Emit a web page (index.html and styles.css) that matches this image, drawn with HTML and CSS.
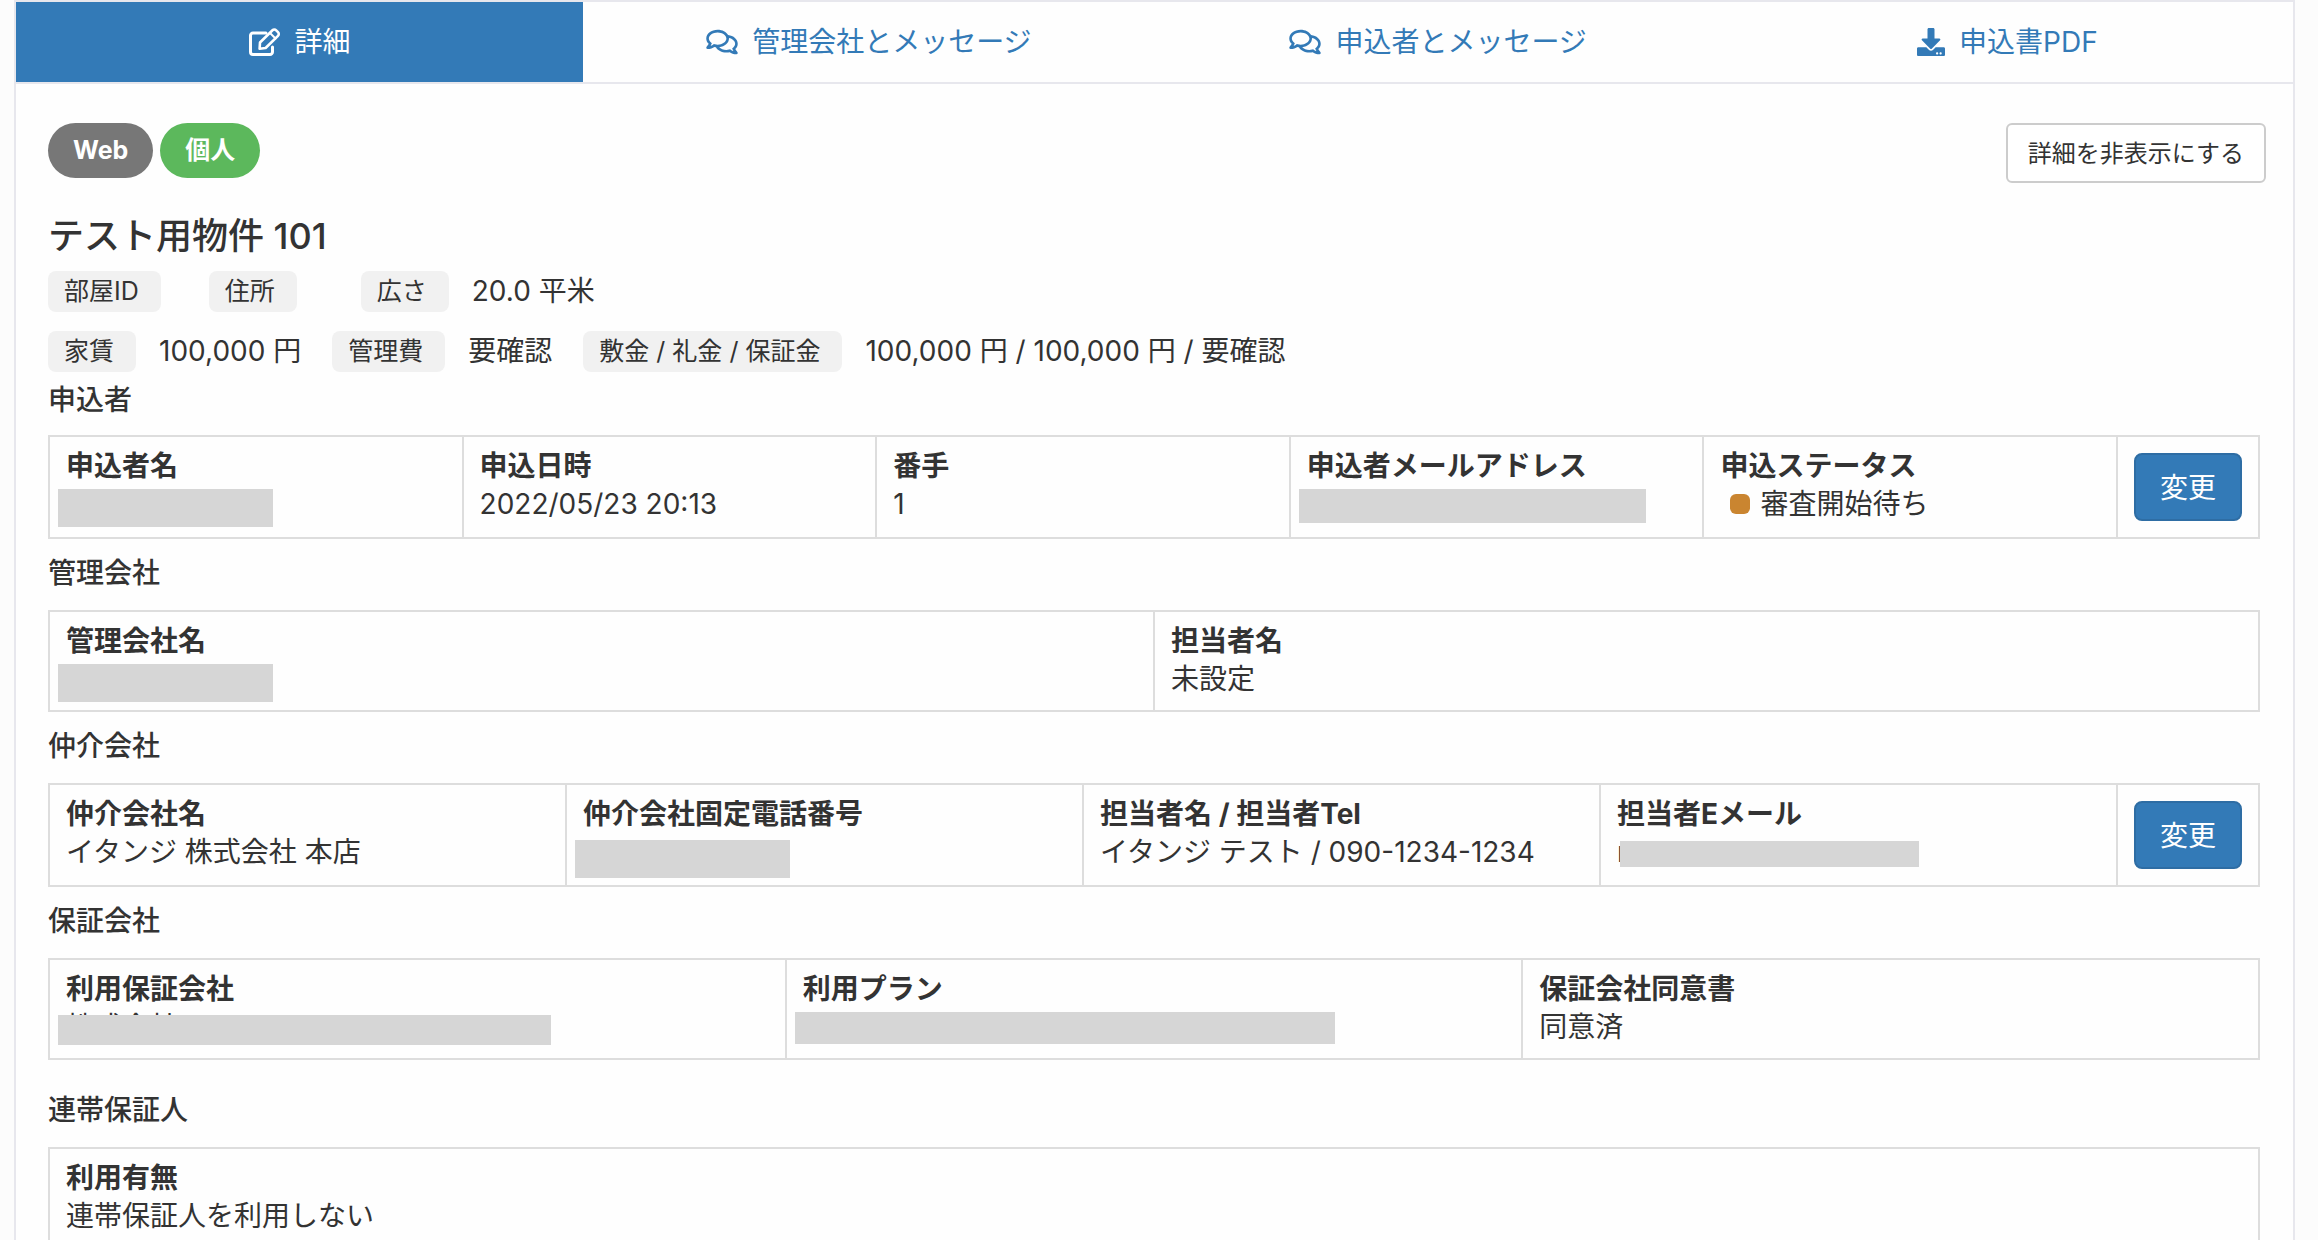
FILE: index.html
```html
<!DOCTYPE html>
<html lang="ja">
<head>
    <meta charset="UTF-8">
    <meta name="viewport" content="width=device-width, initial-scale=1.0">
    <title>申込詳細</title>
    <link rel="stylesheet" href="styles.css">
</head>
<body>
    <div class="panel">
        <nav class="tabs">
            <a href="#detail" class="tab active">
                <svg class="icon icon-wide" viewBox="0 0 32 28" fill="none" stroke="currentColor" stroke-width="3" stroke-linejoin="round" stroke-linecap="round">
                    <path d="M17 5H4a2.500 2.500 0 0 0-2.500 2.500V24A2.500 2.500 0 0 0 4 26.500h17a2.500 2.500 0 0 0 2.500-2.500v-5"/>
                    <path d="M11 14.500 23.500 2.300a2.600 2.600 0 0 1 3.700 0l1.800 1.800a2.600 2.600 0 0 1 0 3.700L16.600 20l-6 .8z" stroke-width="2.600"/>
                    <path d="m21 5 5.500 5.500" stroke-width="2"/>
                </svg>
                詳細
            </a>
            <a href="#company" class="tab">
                <svg class="icon icon-wide" viewBox="0 0 576 512" fill="currentColor">
                    <path d="M532 386.200c27.500-27.100 44-61.100 44-98.200 0-80-76.500-146.100-176.200-157.900C368.300 72.500 294.300 32 208 32 93.100 32 0 103.600 0 192c0 37 16.500 71 44 98.200-15.300 30.700-37.300 54.500-37.700 54.900-6.300 6.700-8.100 16.500-4.400 25 3.600 8.500 12 14 21.200 14 53.500 0 96.700-20.200 125.200-38.800 9.200 2.100 18.700 3.700 28.400 4.900C208.100 407.600 281.800 448 368 448c20.800 0 40.800-2.400 59.800-6.800C456.300 459.700 499.400 480 553 480c9.200 0 17.500-5.500 21.200-14 3.600-8.500 1.900-18.300-4.400-25-.4-.3-22.500-24.100-37.800-54.800zm-392.800-92.300L122.100 305c-14.100 9.100-28.500 16.300-43.100 21.400 2.700-4.700 5.400-9.700 8-14.800l15.500-31.100L77.700 256C64.200 242.600 48 220.700 48 192c0-60.700 73.300-112 160-112s160 51.300 160 112-73.300 112-160 112c-16.500 0-33-1.900-49-5.600l-19.800-4.500zM498.300 352l-24.700 24.400 15.500 31.100c2.600 5.100 5.300 10.100 8 14.800-14.600-5.100-29-12.300-43.100-21.400l-17.100-11.100-19.900 4.600c-16 3.700-32.500 5.600-49 5.600-54 0-102.200-20.100-131.300-49.700C338 339.500 416 272.900 416 192c0-3.400-.4-6.700-.7-10C479.700 196.500 528 238.800 528 288c0 28.700-16.200 50.600-29.700 64z"/>
                </svg>
                管理会社とメッセージ
            </a>
            <a href="#applicant" class="tab">
                <svg class="icon icon-wide" viewBox="0 0 576 512" fill="currentColor">
                    <path d="M532 386.200c27.500-27.100 44-61.100 44-98.200 0-80-76.500-146.100-176.200-157.900C368.300 72.500 294.300 32 208 32 93.100 32 0 103.600 0 192c0 37 16.500 71 44 98.200-15.300 30.700-37.300 54.500-37.700 54.900-6.300 6.700-8.100 16.500-4.400 25 3.600 8.500 12 14 21.200 14 53.500 0 96.700-20.200 125.200-38.800 9.200 2.100 18.700 3.700 28.400 4.900C208.100 407.600 281.800 448 368 448c20.800 0 40.800-2.400 59.800-6.800C456.300 459.700 499.400 480 553 480c9.200 0 17.500-5.500 21.200-14 3.600-8.500 1.900-18.300-4.400-25-.4-.3-22.500-24.100-37.800-54.800zm-392.800-92.300L122.100 305c-14.100 9.100-28.500 16.300-43.100 21.400 2.700-4.700 5.400-9.700 8-14.800l15.500-31.100L77.700 256C64.200 242.600 48 220.700 48 192c0-60.700 73.300-112 160-112s160 51.300 160 112-73.300 112-160 112c-16.500 0-33-1.900-49-5.600l-19.800-4.500zM498.300 352l-24.700 24.400 15.500 31.100c2.600 5.100 5.300 10.100 8 14.800-14.600-5.100-29-12.300-43.100-21.400l-17.100-11.100-19.900 4.600c-16 3.700-32.500 5.600-49 5.600-54 0-102.200-20.100-131.300-49.700C338 339.500 416 272.900 416 192c0-3.400-.4-6.700-.7-10C479.700 196.500 528 238.800 528 288c0 28.700-16.200 50.600-29.700 64z"/>
                </svg>
                申込者とメッセージ
            </a>
            <a href="#pdf" class="tab">
                <svg class="icon" viewBox="0 0 512 512" fill="currentColor">
                    <path d="M216 0h80c13.300 0 24 10.700 24 24v168h87.700c17.800 0 26.700 21.500 14.100 34.100L269.700 378.300c-7.500 7.500-19.800 7.500-27.300 0L90.100 226.100c-12.600-12.600-3.700-34.100 14.100-34.100H192V24c0-13.300 10.700-24 24-24zm296 376v112c0 13.300-10.700 24-24 24H24c-13.300 0-24-10.700-24-24V376c0-13.300 10.700-24 24-24h146.700l49 49c20.100 20.100 52.500 20.100 72.600 0l49-49H488c13.300 0 24 10.700 24 24zm-124 88c0-11-9-20-20-20s-20 9-20 20 9 20 20 20 20-9 20-20zm64 0c0-11-9-20-20-20s-20 9-20 20 9 20 20 20 20-9 20-20z"/>
                </svg>
                申込書PDF
            </a>
        </nav>

        <main class="content">
            <div class="toolbar">
                <div class="badges">
                    <span class="badge">Web</span>
                    <span class="badge badge-success">個人</span>
                </div>
                <button type="button" class="btn btn-default">詳細を非表示にする</button>
            </div>

            <h1>テスト用物件 101</h1>
            <div class="room-info">
                <span class="label">部屋ID</span>
                <span class="room-value"></span>
                <span class="label">住所</span>
                <span class="room-value room-address"></span>
                <span class="label">広さ</span>
                <span class="room-value">20.0 平米</span>
            </div>
            <div class="room-info">
                <span class="label">家賃</span>
                <span class="room-value">100,000 円</span>
                <span class="label">管理費</span>
                <span class="room-value">要確認</span>
                <span class="label">敷金 / 礼金 / 保証金</span>
                <span class="room-value">100,000 円 / 100,000 円 / 要確認</span>
            </div>

            <section>
                <h2 class="first">申込者</h2>
                <table>
                    <tr>
                        <td>
                            <div class="name">申込者名</div>
                            <div class="value"><span class="mask"></span></div>
                        </td>
                        <td>
                            <div class="name">申込日時</div>
                            <div class="value">2022/05/23 20:13</div>
                        </td>
                        <td>
                            <div class="name">番手</div>
                            <div class="value">1</div>
                        </td>
                        <td>
                            <div class="name">申込者メールアドレス</div>
                            <div class="value"><span class="mask mask-address"></span></div>
                        </td>
                        <td>
                            <div class="name">申込ステータス</div>
                            <div class="value status">審査開始待ち</div>
                        </td>
                        <td class="action"><button type="button" class="btn btn-primary">変更</button></td>
                    </tr>
                </table>
            </section>

            <section>
                <h2>管理会社</h2>
                <table>
                    <tr>
                        <td>
                            <div class="name">管理会社名</div>
                            <div class="value"><span class="mask"></span></div>
                        </td>
                        <td>
                            <div class="name">担当者名</div>
                            <div class="value">未設定</div>
                        </td>
                    </tr>
                </table>
            </section>

            <section>
                <h2>仲介会社</h2>
                <table>
                    <tr>
                        <td>
                            <div class="name">仲介会社名</div>
                            <div class="value">イタンジ 株式会社 本店</div>
                        </td>
                        <td>
                            <div class="name">仲介会社固定電話番号</div>
                            <div class="value"><span class="mask mask-phone"></span></div>
                        </td>
                        <td>
                            <div class="name">担当者名 / 担当者Tel</div>
                            <div class="value">イタンジ テスト / 090-1234-1234</div>
                        </td>
                        <td>
                            <div class="name">担当者Eメール</div>
                            <div class="value">r<span class="mask mask-email"></span></div>
                        </td>
                        <td class="action"><button type="button" class="btn btn-primary">変更</button></td>
                    </tr>
                </table>
            </section>

            <section>
                <h2>保証会社</h2>
                <table>
                    <tr>
                        <td>
                            <div class="name">利用保証会社</div>
                            <div class="value">株式会社<span class="mask mask-guarantor"></span></div>
                        </td>
                        <td>
                            <div class="name">利用プラン</div>
                            <div class="value"><span class="mask mask-plan"></span></div>
                        </td>
                        <td>
                            <div class="name">保証会社同意書</div>
                            <div class="value">同意済</div>
                        </td>
                    </tr>
                </table>
            </section>

            <section class="spaced">
                <h2>連帯保証人</h2>
                <table>
                    <tr>
                        <td>
                            <div class="name">利用有無</div>
                            <div class="value">連帯保証人を利用しない</div>
                        </td>
                    </tr>
                </table>
            </section>
        </main>
    </div>
</body>
</html>
```
FILE: styles.css
```css
:root {
    --primary: #337ab7;
    --success: #5cb85c;
    --text: #333;
    --border: #ddd;
    --panel-border: #e7e7ed;
    --mask: #d6d6d6;
}

* {
    box-sizing: border-box;
    margin: 0;
    padding: 0;
}

html {
    height: 100%;
    overflow: hidden;
}

body {
    height: 100%;
    overflow: hidden;
    font-family: Inter, 'Noto Sans CJK JP', sans-serif;
    font-size: 28px;
    line-height: 38px;
    color: var(--text);
    background: #fcfcfc;
}

.panel {
    min-height: 100vh;
    margin: 0 23px 0 14px;
    background: #fefefe;
    border: 2px solid var(--panel-border);
    border-bottom: none;
}

.tabs {
    display: grid;
    grid-template-columns: repeat(4, 1fr);
    border-bottom: 2px solid var(--panel-border);
}

.tab {
    display: flex;
    align-items: center;
    justify-content: center;
    gap: 14px;
    height: 80px;
    margin-right: 2px;
    color: var(--primary);
    text-decoration: none;
}

.tab.active {
    color: #fff;
    background: var(--primary);
}

.icon {
    width: 28px;
    height: 28px;
}

.icon-wide {
    width: 32px;
}

.content {
    padding: 39px 27px 0 32px;
}

.toolbar {
    display: flex;
    justify-content: space-between;
    align-items: flex-start;
}

.badges {
    display: flex;
    gap: 7px;
}

.badge {
    padding: 0 25px;
    font-size: 25px;
    font-weight: 700;
    line-height: 55px;
    color: #fff;
    background: #777;
    border-radius: 28px;
}

.badge-success {
    background: var(--success);
}

.btn {
    font-family: inherit;
    border: 2px solid;
    cursor: pointer;
}

.btn-default {
    height: 60px;
    padding: 0 20px 3px;
    font-size: 24px;
    color: var(--text);
    background: #fff;
    border-color: #ccc;
    border-radius: 6px;
}

.btn-primary {
    width: 108px;
    height: 68px;
    padding-bottom: 3px;
    font-size: 28px;
    color: #fff;
    background: var(--primary);
    border-color: #2e6da4;
    border-radius: 8px;
}

h1 {
    margin: 33px 0 5px;
    font-size: 36px;
    font-weight: 500;
    line-height: 40px;
}

.room-info {
    display: flex;
    align-items: center;
    height: 60px;
}

.label {
    padding: 0 22px 0 16px;
    font-size: 25px;
    line-height: 41px;
    background: #f1f1f1;
    border-radius: 8px;
}

.room-value {
    margin: 0 31px 0 23px;
}

.room-value:empty {
    margin: 0 24px;
}

.room-value.room-address {
    margin: 0 32px;
}

section {
    margin-right: 6px;
}

.spaced {
    padding-top: 16px;
}

h2 {
    padding: 15px 0 18px;
    font-size: 28px;
    font-weight: 500;
    line-height: 38px;
}

h2.first {
    padding: 0 0 16px;
}

table {
    width: 100%;
    table-layout: fixed;
    border-collapse: collapse;
}

td {
    padding: 10px 16px 12px;
    vertical-align: top;
    border: 2px solid var(--border);
}

.action {
    width: 142px;
    padding: 16px;
}

.name {
    font-weight: 700;
}

.value {
    position: relative;
    height: 38px;
}

.status {
    display: flex;
    align-items: center;
    gap: 10px;
    padding-left: 10px;
}

.status::before {
    content: '';
    width: 20px;
    height: 20px;
    background: #ca8530;
    border-radius: 6px;
}

/* grey boxes over personal data */
.mask {
    position: absolute;
    top: 4px;
    left: -8px;
    width: 215px;
    height: 38px;
    background: var(--mask);
}

.mask-address {
    width: 347px;
    height: 34px;
}

.mask-phone {
    top: 7px;
}

.mask-email {
    top: 8px;
    left: 3px;
    width: 299px;
    height: 26px;
}

.mask-guarantor {
    top: 7px;
    width: 493px;
    height: 30px;
}

.mask-plan {
    width: 540px;
    height: 32px;
}
```
